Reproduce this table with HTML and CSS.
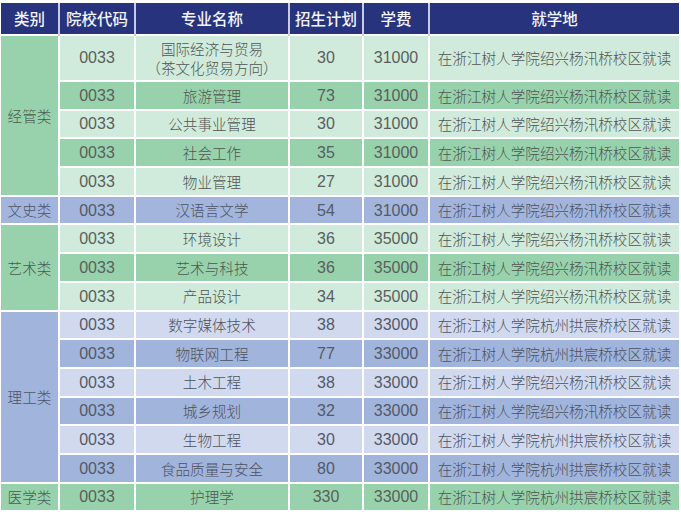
FILE: index.html
```html
<!DOCTYPE html>
<html lang="zh">
<head>
<meta charset="utf-8">
<link rel="stylesheet" href="styles.css">
</head>
<body>
<table class="plan">
  <colgroup>
    <col class="c1"><col class="c2"><col class="c3"><col class="c4"><col class="c5"><col class="c6">
  </colgroup>
  <thead>
    <tr><th>类别</th><th>院校代码</th><th>专业名称</th><th>招生计划</th><th>学费</th><th>就学地</th></tr>
  </thead>
  <tbody>
    <tr class="g-l tall"><td class="cat g-cat" rowspan="5">经管类</td><td class="n">0033</td><td class="two">国际经济与贸易<br>（茶文化贸易方向）</td><td class="n">30</td><td class="n">31000</td><td>在浙江树人学院绍兴杨汛桥校区就读</td></tr>
    <tr class="g-d"><td class="n">0033</td><td>旅游管理</td><td class="n">73</td><td class="n">31000</td><td>在浙江树人学院绍兴杨汛桥校区就读</td></tr>
    <tr class="g-l"><td class="n">0033</td><td>公共事业管理</td><td class="n">30</td><td class="n">31000</td><td>在浙江树人学院绍兴杨汛桥校区就读</td></tr>
    <tr class="g-d"><td class="n">0033</td><td>社会工作</td><td class="n">35</td><td class="n">31000</td><td>在浙江树人学院绍兴杨汛桥校区就读</td></tr>
    <tr class="g-l"><td class="n">0033</td><td>物业管理</td><td class="n">27</td><td class="n">31000</td><td>在浙江树人学院绍兴杨汛桥校区就读</td></tr>
    <tr class="b-m"><td class="cat">文史类</td><td class="n">0033</td><td>汉语言文学</td><td class="n">54</td><td class="n">31000</td><td>在浙江树人学院绍兴杨汛桥校区就读</td></tr>
    <tr class="g-l"><td class="cat g-cat" rowspan="3">艺术类</td><td class="n">0033</td><td>环境设计</td><td class="n">36</td><td class="n">35000</td><td>在浙江树人学院绍兴杨汛桥校区就读</td></tr>
    <tr class="g-d"><td class="n">0033</td><td>艺术与科技</td><td class="n">36</td><td class="n">35000</td><td>在浙江树人学院绍兴杨汛桥校区就读</td></tr>
    <tr class="g-l"><td class="n">0033</td><td>产品设计</td><td class="n">34</td><td class="n">35000</td><td>在浙江树人学院绍兴杨汛桥校区就读</td></tr>
    <tr class="b-l"><td class="cat b-cat" rowspan="6">理工类</td><td class="n">0033</td><td>数字媒体技术</td><td class="n">38</td><td class="n">33000</td><td>在浙江树人学院杭州拱宸桥校区就读</td></tr>
    <tr class="b-d"><td class="n">0033</td><td>物联网工程</td><td class="n">77</td><td class="n">33000</td><td>在浙江树人学院杭州拱宸桥校区就读</td></tr>
    <tr class="b-l"><td class="n">0033</td><td>土木工程</td><td class="n">38</td><td class="n">33000</td><td>在浙江树人学院绍兴杨汛桥校区就读</td></tr>
    <tr class="b-d"><td class="n">0033</td><td>城乡规划</td><td class="n">32</td><td class="n">33000</td><td>在浙江树人学院绍兴杨汛桥校区就读</td></tr>
    <tr class="b-l"><td class="n">0033</td><td>生物工程</td><td class="n">30</td><td class="n">33000</td><td>在浙江树人学院杭州拱宸桥校区就读</td></tr>
    <tr class="b-d"><td class="n">0033</td><td>食品质量与安全</td><td class="n">80</td><td class="n">33000</td><td>在浙江树人学院杭州拱宸桥校区就读</td></tr>
    <tr class="g-d"><td class="cat">医学类</td><td class="n">0033</td><td>护理学</td><td class="n">330</td><td class="n">33000</td><td>在浙江树人学院杭州拱宸桥校区就读</td></tr>
  </tbody>
</table>
</body>
</html>
```

FILE: styles.css
```css
html, body {
  margin: 0;
  padding: 0;
  background: #ffffff;
}
body {
  padding: 3px 2px 0 1px;
  font-family: "Noto Sans CJK SC", "Noto Sans", sans-serif;
}
.plan {
  width: 678px;
  table-layout: fixed;
  border-collapse: collapse;
  font-size: 14.6px;
  font-weight: 300;
  color: #505552;
}
.c1 { width: 58px; }
.c2 { width: 76px; }
.c3 { width: 154px; }
.c4 { width: 74px; }
.c5 { width: 66px; }
.c6 { width: 250px; }

.plan th {
  background: #28337d;
  color: #f3f5fc;
  font-weight: 500;
  font-size: 15.5px;
  height: 31px;
  padding: 0;
  border: 2px solid #ffffff;
  border-top: 0;
  border-bottom: 1px solid #ffffff;
  border-left-color: #c9cde3;
  border-right-color: #c9cde3;
  text-align: center;
  vertical-align: middle;
  line-height: 1;
}
.plan th:first-child { border-left: 0; }
.plan th:last-child { border-right: 0; }

.plan td {
  padding: 0;
  height: 26.7px;
  border: 2px solid #ffffff;
  text-align: center;
  vertical-align: middle;
  line-height: 1.2;
  white-space: nowrap;
}
.plan td.n {
  font-family: "Liberation Sans", Arial, sans-serif;
  font-size: 16px;
  font-weight: 400;
  color: #5a5f5c;
}
.plan tr td:first-child { border-left: 0; }
.plan tr td:last-child { border-right: 0; }
.plan tr.tall td { height: 44px; }
.plan td.two { line-height: 19px; }

.g-l td { background: #d0eadb; }
.g-d td { background: #98d2ac; }
.b-m td { background: #a3b5dd; }
.b-l td { background: #d1d9ef; }
.b-d td { background: #a1b4db; }

.plan td.g-cat { background: #98d2ac; }
.plan td.b-cat { background: #a0b4dc; }
.plan td.cat { color: #4a5a50; }
.b-m td.cat, .plan td.b-cat { color: #4b5468; }
.b-l td, .b-d td, .b-m td { color: #4c5260; }
.plan .b-l td.n, .plan .b-d td.n, .plan .b-m td.n { color: #535a68; }
```
